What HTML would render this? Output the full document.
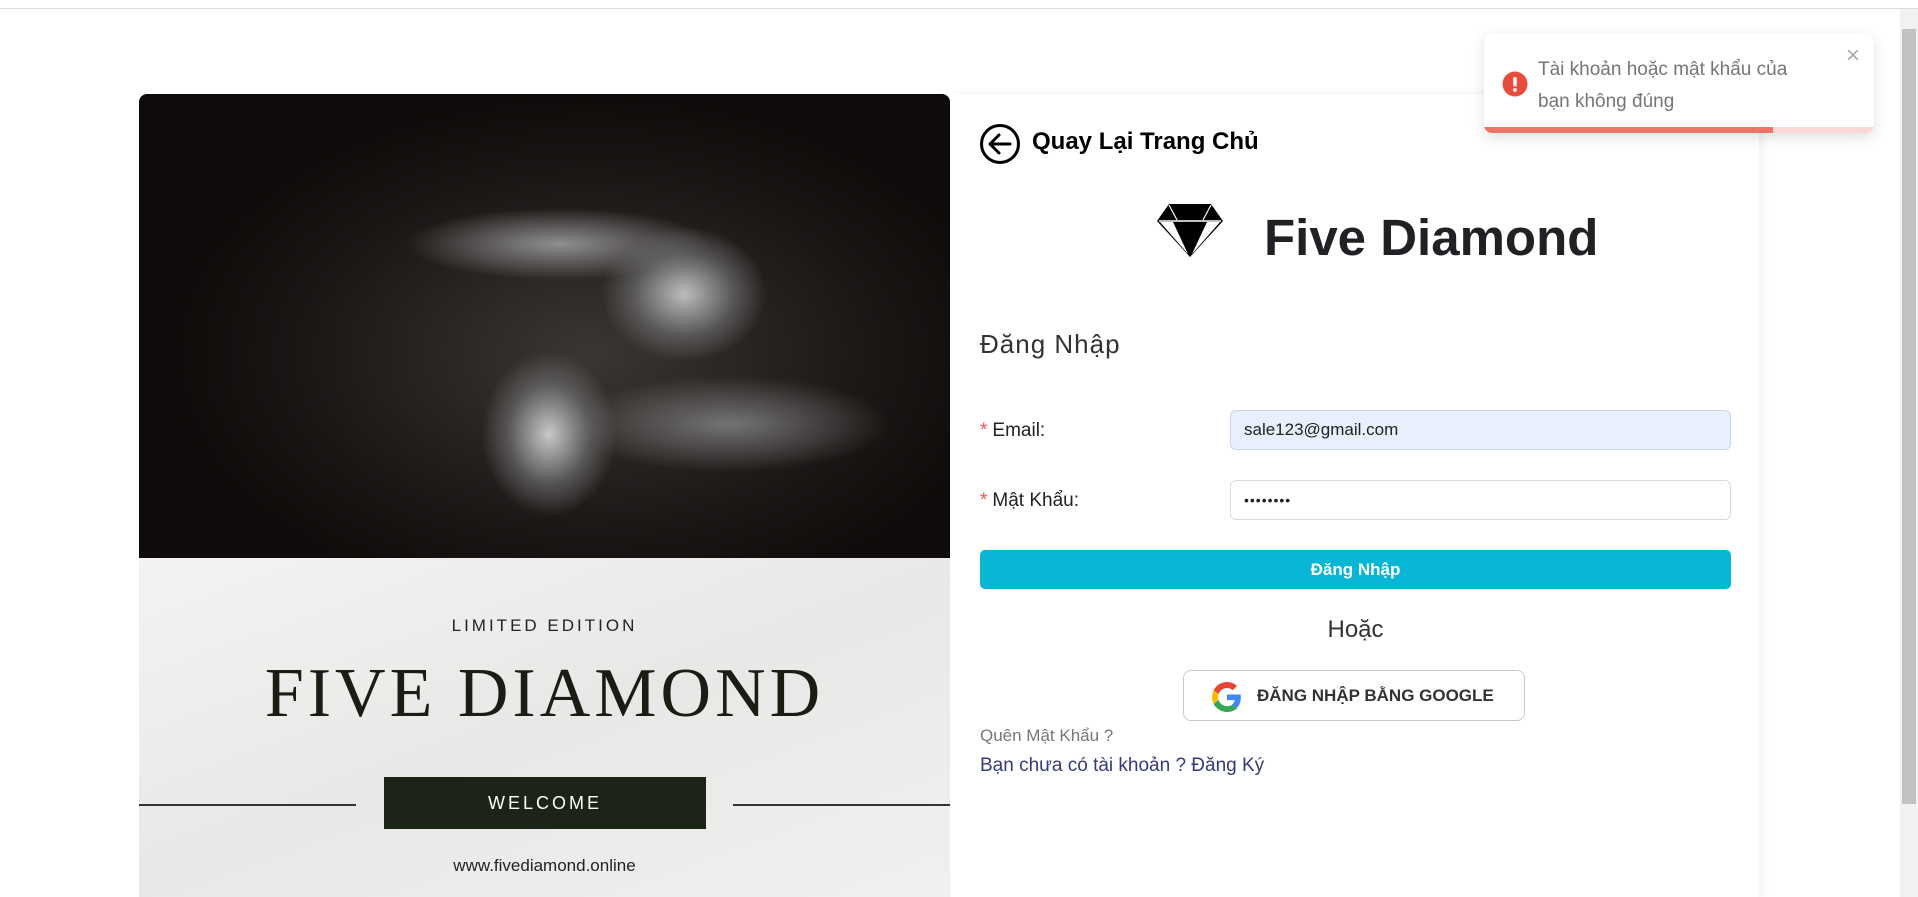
<!DOCTYPE html>
<html><head><meta charset="utf-8"><style>
*{margin:0;padding:0;box-sizing:border-box}
body{width:1918px;height:897px;overflow:hidden;background:#fff;font-family:"Liberation Sans",sans-serif;position:relative;color:#222}
.topline{position:absolute;left:0;top:0;width:1918px;height:9px;border-bottom:1px solid #ddd;background:#fff}
.sb{position:absolute;left:1900px;top:9px;width:18px;height:888px;background:#f1f1f1}
.sb i{position:absolute;left:2px;top:20px;width:14px;height:775px;background:#c1c1c1}
.left{position:absolute;left:139px;top:94px;width:811px;height:803px;border-radius:8px 8px 0 0;overflow:hidden;background:#efefee}
.img{height:464px;background:
radial-gradient(ellipse 110px 90px at 545px 200px,#bdbdbd,rgba(120,120,120,.6) 45%,transparent 75%),
radial-gradient(ellipse 90px 110px at 410px 340px,#c8c8c8,rgba(120,120,120,.6) 45%,transparent 75%),
radial-gradient(ellipse 190px 45px at 420px 150px,rgba(170,170,170,.8),transparent 80%),
radial-gradient(ellipse 200px 60px at 590px 330px,rgba(150,150,150,.7),transparent 80%),
radial-gradient(ellipse 420px 260px at 450px 260px,#3a3634,#1a1615 70%,#0e0b0a)}
.marble{position:absolute;top:464px;left:0;right:0;bottom:0;background:linear-gradient(160deg,#f3f3f2,#e8e8e7 50%,#f0f0ef)}
.le{position:absolute;top:58px;width:100%;text-align:center;font-size:17px;letter-spacing:3px;color:#222}
.fd{position:absolute;top:96px;width:100%;text-align:center;font-family:"Liberation Serif",serif;font-size:70px;letter-spacing:4px;color:#1b1d15}
.ln{position:absolute;top:246px;height:2px;background:#333}
.wel{position:absolute;left:245px;top:219px;width:322px;height:52px;background:#1c2418;color:#fff;text-align:center;line-height:52px;font-size:18px;letter-spacing:3px}
.www{position:absolute;top:298px;width:100%;text-align:center;font-size:17px;color:#222}
.right{position:absolute;left:950px;top:94px;width:809px;height:803px;background:#fff;box-shadow:4px 0 8px rgba(0,0,0,.06)}
.abs{position:absolute}
.inp{position:absolute;left:280px;width:501px;height:40px;border:1px solid #d9d9d9;border-radius:6px;font-size:17px;padding-left:13px;line-height:38px}
.lab{position:absolute;left:30px;font-size:19px;color:#222}
.lab b{color:#ff4d4f;font-weight:normal;margin-right:5px}
.toast{position:absolute;left:1484px;top:34px;width:390px;height:99px;background:#fff;border-radius:8px;box-shadow:0 4px 14px rgba(0,0,0,.13);overflow:hidden}
</style></head><body>
<div class="topline"></div>
<div class="sb"><i></i></div>
<div class="left">
 <div class="img"></div>
 <div class="marble">
  <div class="le">LIMITED EDITION</div>
  <div class="fd">FIVE DIAMOND</div>
  <div class="ln" style="left:0;width:217px"></div>
  <div class="ln" style="left:594px;width:217px"></div>
  <div class="wel">WELCOME</div>
  <div class="www">www.fivediamond.online</div>
 </div>
</div>
<div class="right">
 <svg class="abs" style="left:29px;top:29px" width="42" height="42" viewBox="0 0 42 42"><circle cx="21" cy="21" r="18.5" fill="none" stroke="#000" stroke-width="3"/><path d="M31 21H12M20 12l-9 9 9 9" fill="none" stroke="#000" stroke-width="3" stroke-linecap="round" stroke-linejoin="round"/></svg>
 <div class="abs" style="left:82px;top:34px;font-size:24px;font-weight:bold;color:#000">Quay Lại Trang Chủ</div>
 <svg class="abs" style="left:205px;top:108px" width="70" height="56" viewBox="0 0 70 56"><path d="M14 2h42l12 17L35 55 2 19z" fill="#000"/><path d="M5 20L33 52 18 20zM65 20L37 52 52 20z" fill="#fff"/><path d="M4 19h62" stroke="#fff" stroke-width="1.5"/><path d="M14 3l8 15M56 3l-8 15" stroke="#fff" stroke-width="1.2"/></svg>
 <div class="abs" style="left:314px;top:114px;font-size:51px;font-weight:bold;color:#202124">Five Diamond</div>
 <div class="abs" style="left:30px;top:235px;font-size:26px;color:#333;letter-spacing:1px">Đăng Nhập</div>
 <div class="lab" style="top:326px"><b>*</b>Email:</div>
 <div class="inp" style="top:316px;background:#e8f0fe;border-color:#c9d6ea">sale123@gmail.com</div>
 <div class="lab" style="top:396px"><b>*</b>Mật Khẩu:</div>
 <div class="inp" style="top:386px;font-size:14px;letter-spacing:1px">••••••••</div>
 <div class="abs" style="left:30px;top:456px;width:751px;height:39px;background:#06b6d4;border-radius:5px;color:#fff;font-weight:bold;font-size:17px;text-align:center;line-height:39px">Đăng Nhập</div>
 <div class="abs" style="left:0;width:809px;top:522px;text-align:center;font-size:24px;color:#333"><span style="position:relative;left:1px">Hoặc</span></div>
 <div class="abs" style="left:233px;top:576px;width:342px;height:51px;border:1px solid #c8c8c8;border-radius:8px">
  <svg class="abs" style="left:28px;top:11px" width="30" height="30" viewBox="0 0 48 48"><path fill="#EA4335" d="M24 9.5c3.5 0 6.6 1.2 9.1 3.6l6.8-6.8C35.8 2.4 30.3 0 24 0 14.6 0 6.6 5.4 2.6 13.2l7.9 6.2C12.4 13.7 17.7 9.5 24 9.5z"/><path fill="#4285F4" d="M46.1 24.5c0-1.6-.1-3.1-.4-4.5H24v9h12.4c-.5 2.9-2.2 5.3-4.6 7l7.5 5.8c4.4-4 6.8-10 6.8-17.3z"/><path fill="#FBBC05" d="M10.5 28.6c-.5-1.4-.8-3-.8-4.6s.3-3.2.8-4.6l-7.9-6.2C.9 16.5 0 20.1 0 24s.9 7.5 2.6 10.8l7.9-6.2z"/><path fill="#34A853" d="M24 48c6.5 0 11.9-2.1 15.9-5.8l-7.5-5.8c-2.1 1.4-4.8 2.300-8.4 2.3-6.3 0-11.6-4.2-13.5-9.9l-7.9 6.2C6.6 42.6 14.6 48 24 48z"/></svg>
  <div class="abs" style="left:73px;top:15px;font-size:17px;font-weight:bold;color:#333">ĐĂNG NHẬP BẰNG GOOGLE</div>
 </div>
 <div class="abs" style="left:30px;top:632px;font-size:17px;color:#777">Quên Mật Khẩu ?</div>
 <div class="abs" style="left:30px;top:661px;font-size:19px;color:#353a7a">Bạn chưa có tài khoản ? Đăng Ký</div>
</div>
<div class="toast">
 <svg class="abs" style="left:18px;top:37px" width="26" height="26" viewBox="0 0 26 26"><circle cx="13" cy="13" r="12.5" fill="#e74c3c"/><rect x="11.3" y="6" width="3.4" height="9.5" rx="1.5" fill="#fff"/><circle cx="13" cy="19" r="1.9" fill="#fff"/></svg>
 <div class="abs" style="left:54px;top:20px;font-size:19px;color:#757575;line-height:32px">Tài khoản hoặc mật khẩu của<br>bạn không đúng</div>
 <div class="abs" style="left:362px;top:8px;font-size:24px;color:#aaa">×</div>
 <div class="abs" style="left:0;top:93px;width:390px;height:6px;background:#fbd8d5"></div>
 <div class="abs" style="left:0;top:93px;width:289px;height:6px;background:#ed7468"></div>
</div>
</body></html>
